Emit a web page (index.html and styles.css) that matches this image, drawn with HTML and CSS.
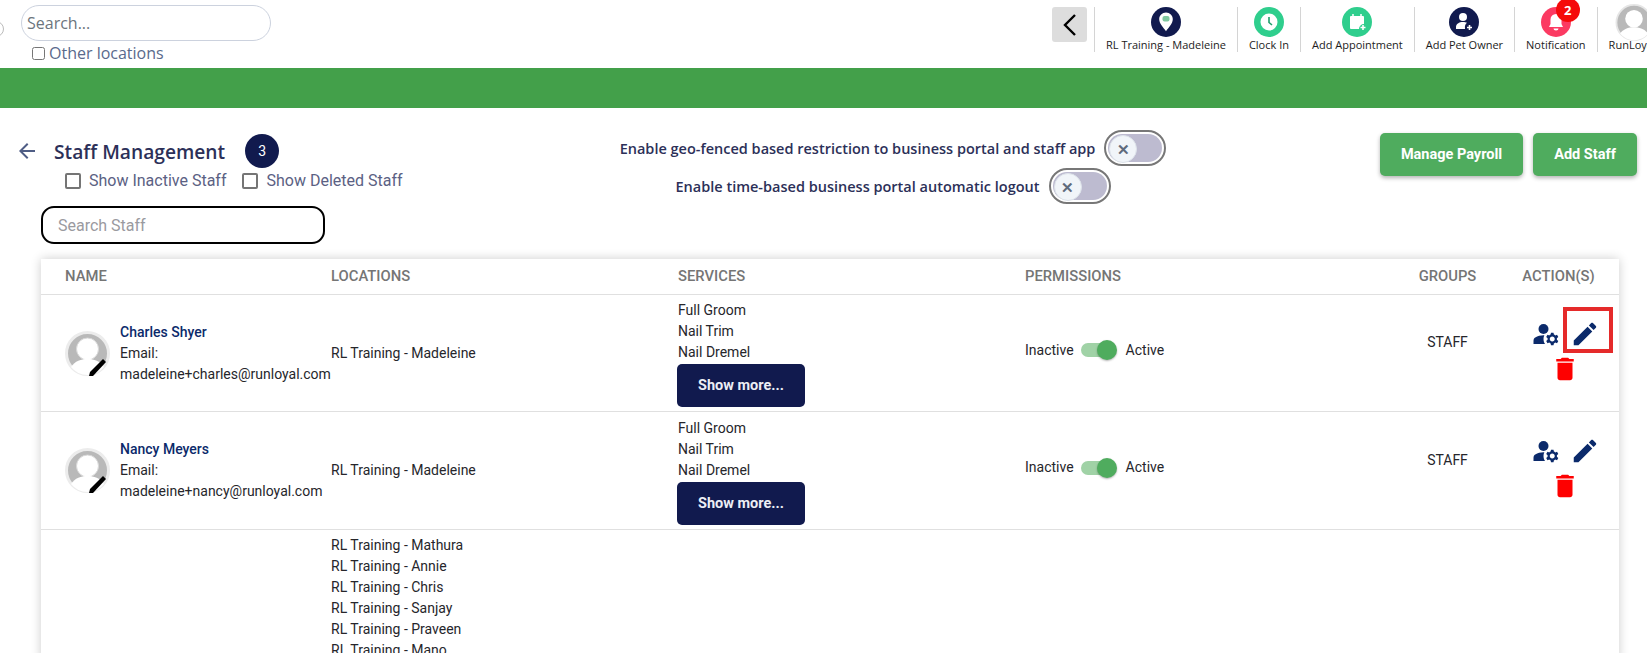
FILE: index.html
```html
<!DOCTYPE html>
<html lang="en">

    <head>
        <meta charset="UTF-8">
        <meta name="viewport" content="width=device-width, initial-scale=1.0">
        <title>Staff Management</title>

        <link rel="stylesheet" href="styles.css">
    </head>

    <body>

        <header class="topbar">
            <div class="logoEdge"></div>
            <div class="globalSearch">
                <input type="text" placeholder="Search...">
                <label class="otherLocations"><input type="checkbox">Other locations</label>
            </div>

            <nav class="topnav">
                <button class="collapseBtn">
                    <svg width="16" height="24" viewBox="0 0 16 24"><path d="M13 2 3 12l10 10" fill="none" stroke="#000" stroke-width="2.4"/></svg>
                </button>
                <div class="navItem">
                    <svg class="navIcon" viewBox="0 0 30 30">
                        <circle cx="15" cy="15" r="15" fill="#111a4e"/>
                        <path d="M15 5.500c-3.800 0-6.800 3-6.800 6.700 0 4.300 4.300 8.300 6.800 12 2.500-3.700 6.800-7.700 6.800-12 0-3.700-3-6.700-6.800-6.700z" fill="#fff"/>
                        <rect x="11.500" y="9" width="7" height="5.500" rx="2" fill="#7fc8a0"/>
                    </svg>
                    <span>RL Training - Madeleine</span>
                </div>
                <div class="navItem">
                    <svg class="navIcon" viewBox="0 0 30 30">
                        <circle cx="15" cy="15" r="15" fill="#2fce8d"/>
                        <circle cx="15" cy="15" r="8.500" fill="#fff"/>
                        <path d="M15 10v5.500l3 2.500" fill="none" stroke="#1f9d6b" stroke-width="1.600"/>
                    </svg>
                    <span>Clock In</span>
                </div>
                <div class="navItem">
                    <svg class="navIcon" viewBox="0 0 30 30">
                        <circle cx="15" cy="15" r="15" fill="#2fce8d"/>
                        <path d="M9 9h12a1 1 0 0 1 1 1v7a5 5 0 0 0-5 5H9a1 1 0 0 1-1-1V10a1 1 0 0 1 1-1z" fill="#fff"/>
                        <path d="M11 7v3M19 7v3" stroke="#fff" stroke-width="1.500"/>
                        <path d="M21 18v5M18.500 20.500h5" stroke="#fff" stroke-width="1.600"/>
                    </svg>
                    <span>Add Appointment</span>
                </div>
                <div class="navItem">
                    <svg class="navIcon" viewBox="0 0 30 30">
                        <circle cx="15" cy="15" r="15" fill="#111a4e"/>
                        <circle cx="14" cy="10" r="4" fill="#fff"/>
                        <path d="M7 22v-2c0-3 3-5 7-5 1.500 0 3 .3 4 .8-1.500 1-2.500 3-2 6.200z" fill="#fff"/>
                        <path d="M20.500 18v5M18 20.500h5" stroke="#fff" stroke-width="1.600"/>
                    </svg>
                    <span>Add Pet Owner</span>
                </div>
                <div class="navItem">
                    <svg class="navIcon" viewBox="0 0 30 30">
                        <circle cx="15" cy="15" r="15" fill="#fb3a62"/>
                        <path d="M15 7a5.500 5.500 0 0 0-5.500 5.500V17L8 20h14l-1.500-3v-4.500A5.500 5.500 0 0 0 15 7z" fill="#fff"/>
                        <path d="M12.500 21.500h5a2.500 2 0 0 1-5 0z" fill="#fff"/>
                    </svg>
                    <span>Notification</span>
                    <b class="navBadge">2</b>
                </div>
                <div class="navItem navUser">
                    <svg class="navAvatar" viewBox="0 0 40 40">
                        <circle cx="20" cy="20" r="19" fill="#b9b9b9" stroke="#e6e6e6" stroke-width="2"/>
                        <circle cx="20" cy="16" r="9.500" fill="#fff"/>
                        <path d="M5 32c3-5 9-7 15-7s12 2 15 7a19 19 0 0 1-30 0z" fill="#fff"/>
                    </svg>
                    <span>RunLoyal</span>
                </div>
            </nav>
        </header>

        <div class="greenBar"></div>

        <main>
            <section class="pageHead">
                <div class="headLeft">
                    <div class="titleRow">
                        <svg class="backArrow" viewBox="0 0 24 24"><path d="M20 11H7.830l5.590-5.590L12 4l-8 8 8 8 1.410-1.410L7.830 13H20v-2z"/></svg>
                        <h1>Staff Management</h1>
                        <span class="countBadge">3</span>
                    </div>
                    <div class="filters">
                        <label><span class="box"></span>Show Inactive Staff</label>
                        <label><span class="box"></span>Show Deleted Staff</label>
                    </div>
                    <input class="staffSearch" type="text" placeholder="Search Staff">
                </div>

                <div class="headCenter">
                    <div class="settingRow">
                        <span>Enable geo-fenced based restriction to business portal and staff app</span>
                        <span class="xToggle"><span class="knob">&#10005;</span></span>
                    </div>
                    <div class="settingRow">
                        <span>Enable time-based business portal automatic logout</span>
                        <span class="xToggle"><span class="knob">&#10005;</span></span>
                    </div>
                </div>

                <div class="headRight">
                    <button class="greenBtn payrollBtn">Manage Payroll</button>
                    <button class="greenBtn addBtn">Add Staff</button>
                </div>
            </section>

            <section class="staffTable">
                <div class="row headRow">
                    <div>NAME</div>
                    <div>LOCATIONS</div>
                    <div>SERVICES</div>
                    <div>PERMISSIONS</div>
                    <div class="center">GROUPS</div>
                    <div class="center actionHead">ACTION(S)</div>
                </div>

                <div class="row staffRow">
                    <div class="nameCell">
                        <div class="avatar">
                            <svg viewBox="0 0 45 45">
                                <circle cx="22.500" cy="22.500" r="21" fill="#b9b9b9" stroke="#ececec" stroke-width="3"/>
                                <circle cx="22.500" cy="18" r="11" fill="#fff" stroke="#d8d8d8"/>
                                <path d="M6 36c4-6 10-8 16.500-8S35 30 39 36a21 21 0 0 1-33 0z" fill="#fff"/>
                                <path d="M24 45l1-4 13-13 3 3-13 14z" fill="#000"/>
                            </svg>
                        </div>
                        <div>
                            <div class="staffName">Charles Shyer</div>
                            <div>Email:</div>
                            <div>madeleine+charles@runloyal.com</div>
                        </div>
                    </div>
                    <div>RL Training - Madeleine</div>
                    <div class="servicesCell">
                        <div>Full Groom</div>
                        <div>Nail Trim</div>
                        <div>Nail Dremel</div>
                        <button class="moreBtn">Show more...</button>
                    </div>
                    <div class="permCell">
                        <span>Inactive</span>
                        <span class="switch"><span class="thumb"></span></span>
                        <span>Active</span>
                    </div>
                    <div class="center groupCell">STAFF</div>
                    <div class="actions">
                        <svg class="icon" viewBox="0 0 24 24"><circle cx="10" cy="8" r="4"/><path d="M10.670 13.020C10.450 13.010 10.230 13 10 13c-2.420 0-4.680.67-6.610 1.820C2.510 15.340 2 16.320 2 17.350V20h9.260c-.79-1.130-1.260-2.510-1.260-4 0-1.070.25-2.070.67-2.980z"/><path d="M20.750 16c0-.22-.03-.42-.06-.63l1.140-1.010-1-1.730-1.450.49c-.32-.27-.68-.48-1.080-.63L18 11h-2l-.3 1.490c-.4.15-.76.36-1.080.63l-1.450-.49-1 1.730 1.140 1.010c-.03.21-.06.41-.06.63s.03.42.06.63l-1.140 1.010 1 1.730 1.450-.49c.32.27.68.48 1.080.63L16 21h2l.3-1.490c.4-.15.76-.36 1.080-.63l1.450.49 1-1.730-1.140-1.010c.03-.21.06-.41.06-.63zM17 18c-1.100 0-2-.9-2-2s.9-2 2-2 2 .9 2 2-.9 2-2 2z"/></svg>
                        <span class="editWrap highlighted">
                            <svg class="icon" viewBox="0 0 24 24"><path d="M3 17.250V21h3.750L17.810 9.940l-3.750-3.750L3 17.250zM20.710 7.040c.39-.39.39-1.020 0-1.410l-2.340-2.340c-.39-.39-1.020-.39-1.410 0l-1.830 1.830 3.750 3.750 1.830-1.830z"/></svg>
                        </span>
                        <svg class="icon trash" viewBox="0 0 24 24"><path d="M6 19c0 1.100.9 2 2 2h8c1.100 0 2-.9 2-2V7H6v12zM19 4h-3.500l-1-1h-5l-1 1H5v2h14V4z"/></svg>
                    </div>
                </div>

                <div class="row staffRow">
                    <div class="nameCell">
                        <div class="avatar">
                            <svg viewBox="0 0 45 45">
                                <circle cx="22.500" cy="22.500" r="21" fill="#b9b9b9" stroke="#ececec" stroke-width="3"/>
                                <circle cx="22.500" cy="18" r="11" fill="#fff" stroke="#d8d8d8"/>
                                <path d="M6 36c4-6 10-8 16.500-8S35 30 39 36a21 21 0 0 1-33 0z" fill="#fff"/>
                                <path d="M24 45l1-4 13-13 3 3-13 14z" fill="#000"/>
                            </svg>
                        </div>
                        <div>
                            <div class="staffName">Nancy Meyers</div>
                            <div>Email:</div>
                            <div>madeleine+nancy@runloyal.com</div>
                        </div>
                    </div>
                    <div>RL Training - Madeleine</div>
                    <div class="servicesCell">
                        <div>Full Groom</div>
                        <div>Nail Trim</div>
                        <div>Nail Dremel</div>
                        <button class="moreBtn">Show more...</button>
                    </div>
                    <div class="permCell">
                        <span>Inactive</span>
                        <span class="switch"><span class="thumb"></span></span>
                        <span>Active</span>
                    </div>
                    <div class="center groupCell">STAFF</div>
                    <div class="actions">
                        <svg class="icon" viewBox="0 0 24 24"><circle cx="10" cy="8" r="4"/><path d="M10.670 13.020C10.450 13.010 10.230 13 10 13c-2.420 0-4.680.67-6.610 1.820C2.510 15.340 2 16.320 2 17.350V20h9.260c-.79-1.130-1.260-2.510-1.260-4 0-1.070.25-2.070.67-2.980z"/><path d="M20.750 16c0-.22-.03-.42-.06-.63l1.140-1.010-1-1.730-1.450.49c-.32-.27-.68-.48-1.080-.63L18 11h-2l-.3 1.490c-.4.15-.76.36-1.080.63l-1.450-.49-1 1.730 1.140 1.010c-.03.21-.06.41-.06.63s.03.42.06.63l-1.140 1.010 1 1.730 1.450-.49c.32.27.68.48 1.080.63L16 21h2l.3-1.490c.4-.15.76-.36 1.080-.63l1.450.49 1-1.730-1.140-1.010c.03-.21.06-.41.06-.63zM17 18c-1.100 0-2-.9-2-2s.9-2 2-2 2 .9 2 2-.9 2-2 2z"/></svg>
                        <span class="editWrap">
                            <svg class="icon" viewBox="0 0 24 24"><path d="M3 17.250V21h3.750L17.810 9.940l-3.750-3.750L3 17.250zM20.710 7.040c.39-.39.39-1.020 0-1.410l-2.340-2.340c-.39-.39-1.020-.39-1.410 0l-1.830 1.830 3.750 3.750 1.830-1.830z"/></svg>
                        </span>
                        <svg class="icon trash" viewBox="0 0 24 24"><path d="M6 19c0 1.100.9 2 2 2h8c1.100 0 2-.9 2-2V7H6v12zM19 4h-3.500l-1-1h-5l-1 1H5v2h14V4z"/></svg>
                    </div>
                </div>

                <div class="row lastRow">
                    <div></div>
                    <div>
                        <div>RL Training - Mathura</div>
                        <div>RL Training - Annie</div>
                        <div>RL Training - Chris</div>
                        <div>RL Training - Sanjay</div>
                        <div>RL Training - Praveen</div>
                        <div>RL Training - Mano</div>
                    </div>
                </div>
            </section>
        </main>

    </body>

</html>
```

FILE: styles.css
```css
html, body {
    height: 100%;
    overflow: hidden;
}

body {
    font-family: Roboto, sans-serif;
    background-color: #fff;
    color: #212121;
    margin: 0;
    padding: 0;
}

button {
    border: none;
    cursor: pointer;
    font-family: Roboto, sans-serif;
}

/* top bar */
.topbar {
    display: flex;
    height: 68px;
    overflow: hidden;
    background-color: #fff;
}

.logoEdge {
    width: 14px;
    height: 14px;
    margin: 21px 0 0 -12px;
    border: 1px solid #bbb;
    border-radius: 50%;
    flex-shrink: 0;
}

.globalSearch {
    margin: 5px 0 0 17px;
    width: 250px;
}

.globalSearch input[type="text"] {
    width: 100%;
    height: 36px;
    box-sizing: border-box;
    border: 1px solid #ccd2de;
    border-radius: 18px;
    padding: 0 5px;
    font-family: "Open Sans", sans-serif;
    font-size: 16px;
}

.globalSearch input::placeholder {
    color: #6c757d;
}

.otherLocations {
    display: flex;
    align-items: center;
    margin: 1px 0 0 11px;
    font-family: "Open Sans", sans-serif;
    font-size: 16px;
    line-height: 22px;
    color: #5a6a8c;
}

.otherLocations input {
    width: 13px;
    height: 13px;
    margin: 0 4px 0 0;
}

.topnav {
    display: flex;
    align-items: flex-start;
    margin-left: auto;
    margin-top: 7px;
    flex-shrink: 0;
    width: 595px;
}

.collapseBtn {
    width: 35px;
    height: 35px;
    flex-shrink: 0;
    margin-right: 7px;
    background-color: #ddd;
    border-radius: 3px;
    display: flex;
    align-items: center;
    justify-content: center;
    padding: 0;
}

.navItem {
    position: relative;
    display: flex;
    flex-direction: column;
    align-items: center;
    flex-shrink: 0;
    height: 45px;
    padding: 0 11px;
    border-left: 1px solid #d4d4d4;
    font-family: "Open Sans", sans-serif;
    font-size: 11px;
    white-space: nowrap;
    color: #1c1c1c;
}

.navItem span {
    margin-top: 1px;
    line-height: 14px;
}

.navIcon {
    width: 30px;
    height: 30px;
}

.navBadge {
    position: absolute;
    top: -9px;
    right: 17px;
    width: 24px;
    height: 24px;
    border-radius: 50%;
    background-color: #f50a0a;
    color: #fff;
    font-size: 13px;
    line-height: 24px;
    text-align: center;
}

.navUser {
    align-items: flex-start;
    padding: 0 0 0 11px;
}

.navAvatar {
    width: 38px;
    height: 38px;
    margin: -3px 0 -4px 6px;
}

.greenBar {
    height: 40px;
    background-color: #43a04a;
}

/* page heading */
.pageHead {
    display: flex;
    align-items: flex-start;
    padding: 22px 10px 15px 18px;
}

.headLeft {
    width: 430px;
    flex-shrink: 0;
    padding-top: 4px;
}

.titleRow {
    display: flex;
    align-items: center;
    height: 34px;
}

.backArrow {
    width: 24px;
    height: 24px;
    fill: #4f5d85;
    margin-left: -3px;
}

h1 {
    margin: 0 20px 0 15px;
    font-family: "Open Sans", sans-serif;
    font-size: 19.200px;
    font-weight: 600;
    color: #2c3058;
}

.countBadge {
    width: 34px;
    height: 34px;
    border-radius: 50%;
    background-color: #111a4e;
    color: #fff;
    font-size: 14px;
    line-height: 34px;
    text-align: center;
}

.filters {
    display: flex;
    gap: 16px;
    margin: 4px 0 0 47px;
    font-size: 16px;
    line-height: 18px;
    color: #5b6183;
}

.filters label {
    display: flex;
    align-items: center;
}

.box {
    width: 12px;
    height: 12px;
    margin-right: 8px;
    border: 2px solid #757575;
    border-radius: 2px;
}

.staffSearch {
    display: block;
    width: 284px;
    height: 38px;
    box-sizing: border-box;
    margin: 16px 0 0 23px;
    padding: 0 15px;
    border: 2px solid #000;
    border-radius: 13px;
    font-family: Roboto, sans-serif;
    font-size: 16px;
}

.staffSearch::placeholder {
    color: #9a9a9f;
}

.headCenter {
    width: 890px;
    flex-shrink: 0;
    display: flex;
    flex-direction: column;
    align-items: center;
    gap: 2px;
}

.settingRow {
    display: flex;
    align-items: center;
    gap: 9px;
    font-family: "Open Sans", sans-serif;
    font-size: 14.500px;
    font-weight: 600;
    color: #2c3058;
}

.xToggle {
    display: block;
    width: 62px;
    height: 36px;
    box-sizing: border-box;
    padding: 2px;
    border: 2px solid #777;
    border-radius: 18px;
    background-color: #bdbbd0;
    background-clip: content-box;
}

.knob {
    display: block;
    width: 26px;
    height: 26px;
    margin: 1px;
    border: 1px solid #dde3ea;
    border-radius: 50%;
    background-color: #f1f5f9;
    color: #5f6b7c;
    font-size: 15px;
    font-weight: 700;
    line-height: 26px;
    text-align: center;
}

.headRight {
    display: flex;
    gap: 10px;
    margin-left: auto;
    padding-top: 3px;
}

.greenBtn {
    height: 43px;
    background-color: #4fac5e;
    color: #fff;
    border-radius: 5px;
    font-size: 14.500px;
    font-weight: 700;
    box-shadow: 0 2px 4px rgba(0, 0, 0, 0.3);
}

.payrollBtn {
    width: 143px;
}

.addBtn {
    width: 104px;
}

/* staff table */
.staffTable {
    margin: 0 28px 0 41px;
    box-shadow: 0 0 10px rgba(0, 0, 0, 0.2);
    font-size: 14px;
    line-height: 21px;
    color: #26262b;
}

.row {
    display: grid;
    grid-template-columns: 266px 347px 347px 375px 95px 124px;
    padding-left: 24px;
    border-bottom: 1px solid #e0e0e0;
    box-sizing: border-box;
}

.headRow {
    height: 36px;
    align-items: center;
    font-size: 14.800px;
    font-weight: 500;
    color: #757575;
}

.actionHead {
    padding-left: 3px;
}

.staffRow {
    height: 117px;
    align-items: center;
}

.staffRow + .staffRow {
    height: 118px;
}

.lastRow {
    padding-top: 5px;
    border-bottom: none;
}

.center {
    text-align: center;
}

.groupCell {
    padding-bottom: 21px;
}

.nameCell {
    display: flex;
    align-items: center;
    white-space: nowrap;
    gap: 10px;
}

.avatar {
    width: 45px;
    height: 45px;
    flex-shrink: 0;
}

.avatar svg {
    display: block;
    width: 45px;
    height: 45px;
}

.staffName {
    font-weight: 500;
    color: #0b2a6b;
}

.servicesCell {
    padding-top: 1px;
}

.moreBtn {
    display: block;
    width: 128px;
    height: 43px;
    margin: 1px 0 0 -1px;
    background-color: #111a4e;
    color: #eceef5;
    border-radius: 5px;
    font-size: 14.500px;
    font-weight: 700;
}

.permCell {
    display: flex;
    align-items: center;
    padding-bottom: 6px;
}

.switch {
    position: relative;
    display: block;
    width: 34px;
    height: 14px;
    margin: 0 11px 0 7px;
    border-radius: 7px;
    background-color: #a0d2a6;
}

.thumb {
    position: absolute;
    top: -3px;
    right: -2px;
    width: 20px;
    height: 20px;
    border-radius: 50%;
    background-color: #4fac5e;
    box-shadow: 0 1px 2px rgba(0, 0, 0, 0.3);
}

.actions {
    display: flex;
    flex-wrap: wrap;
    justify-content: center;
    gap: 5px 9px;
    padding: 0 8px 4px 24px;
}

.icon {
    display: block;
    width: 30px;
    height: 30px;
    fill: #0b2a6b;
}

.trash {
    fill: #fe0000;
}

.editWrap {
    position: relative;
    display: block;
}

.highlighted::after {
    content: "";
    position: absolute;
    top: -12px;
    left: -7px;
    width: 42px;
    height: 38px;
    border: 4px solid #e52a2a;
}
```
